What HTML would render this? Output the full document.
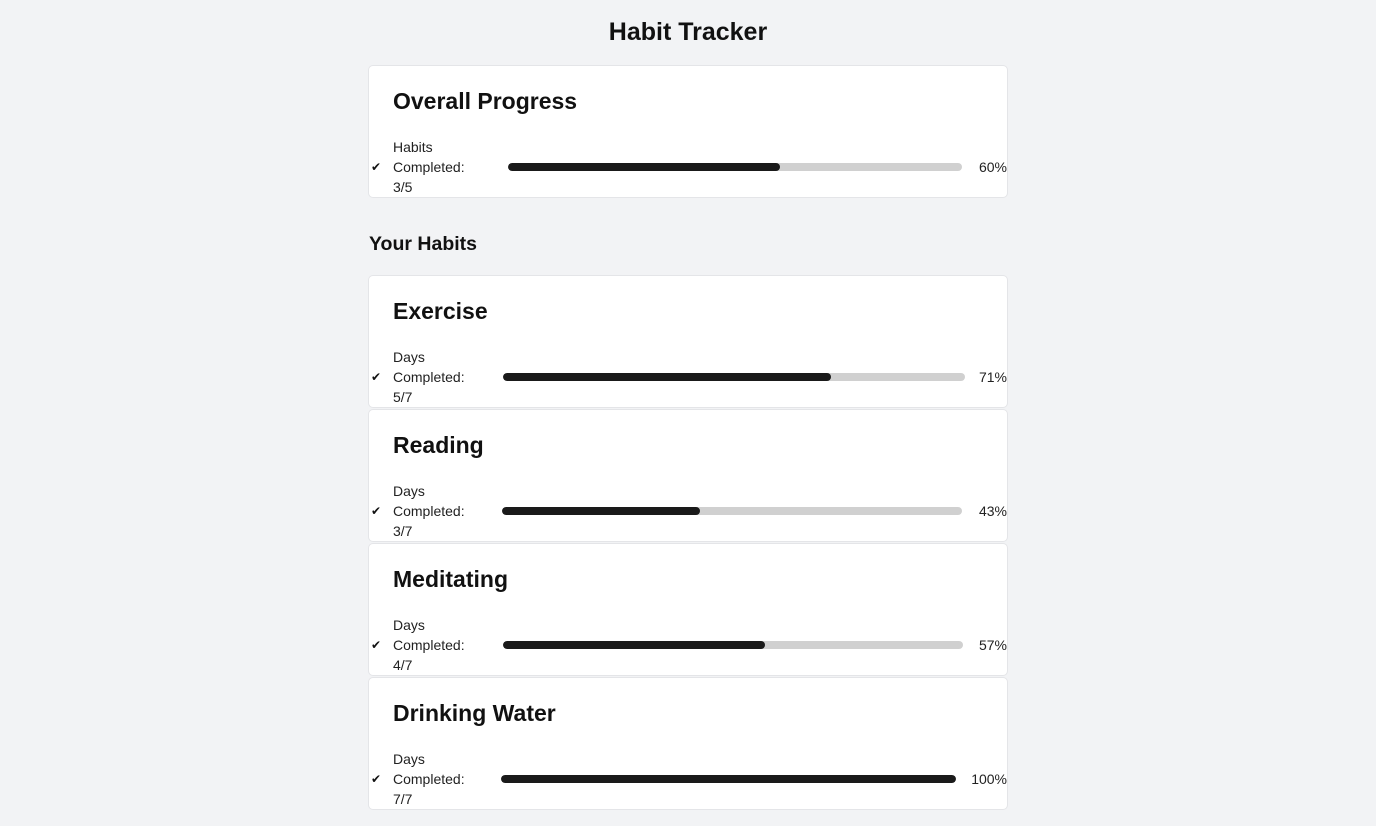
<!DOCTYPE html>
<html><head><meta charset="utf-8"><style>
body{margin:0;background:#f2f3f5;font-family:"Liberation Sans",sans-serif;color:#111;width:1376px;height:826px;position:relative;overflow:hidden}
.h1{position:absolute;top:18px;left:0;width:1376px;text-align:center;font-size:25px;font-weight:bold}
.card{position:absolute;left:368px;width:640px;height:133px;background:#fff;border:1px solid #e4e5e8;border-radius:5px;box-sizing:border-box}
.t{position:absolute;left:24px;top:22px;font-size:23px;font-weight:bold}
.lab{position:absolute;left:24px;top:71px;font-size:14px;line-height:20px;color:#222}
.ck{position:absolute;left:2px;top:94px;font-size:12px}
.bar{position:absolute;top:97px;height:8px;background:#d0d0d0;border-radius:4px;overflow:hidden}
.fill{height:100%;background:#1a1a1a;border-radius:4px}
.pct{position:absolute;right:0;top:93px;font-size:14px;color:#222}
.sub{position:absolute;left:369px;top:233px;font-size:19.5px;font-weight:bold}
</style></head><body>
<div class="h1">Habit Tracker</div>
<div class="card" style="top:65px"><div class="t">Overall Progress</div><div class="ck">✔</div><div class="lab">Habits<br>Completed:<br>3/5</div><div class="bar" style="left:139px;width:454px"><div class="fill" style="width:60%"></div></div><div class="pct">60%</div></div>
<div class="sub">Your Habits</div>
<div class="card" style="top:275px"><div class="t">Exercise</div><div class="ck">✔</div><div class="lab">Days<br>Completed:<br>5/7</div><div class="bar" style="left:134px;width:462px"><div class="fill" style="width:71%"></div></div><div class="pct">71%</div></div>
<div class="card" style="top:409px"><div class="t">Reading</div><div class="ck">✔</div><div class="lab">Days<br>Completed:<br>3/7</div><div class="bar" style="left:133px;width:460px"><div class="fill" style="width:43%"></div></div><div class="pct">43%</div></div>
<div class="card" style="top:543px"><div class="t">Meditating</div><div class="ck">✔</div><div class="lab">Days<br>Completed:<br>4/7</div><div class="bar" style="left:134px;width:460px"><div class="fill" style="width:57%"></div></div><div class="pct">57%</div></div>
<div class="card" style="top:677px"><div class="t">Drinking Water</div><div class="ck">✔</div><div class="lab">Days<br>Completed:<br>7/7</div><div class="bar" style="left:132px;width:455px"><div class="fill" style="width:100%"></div></div><div class="pct">100%</div></div>
</body></html>
